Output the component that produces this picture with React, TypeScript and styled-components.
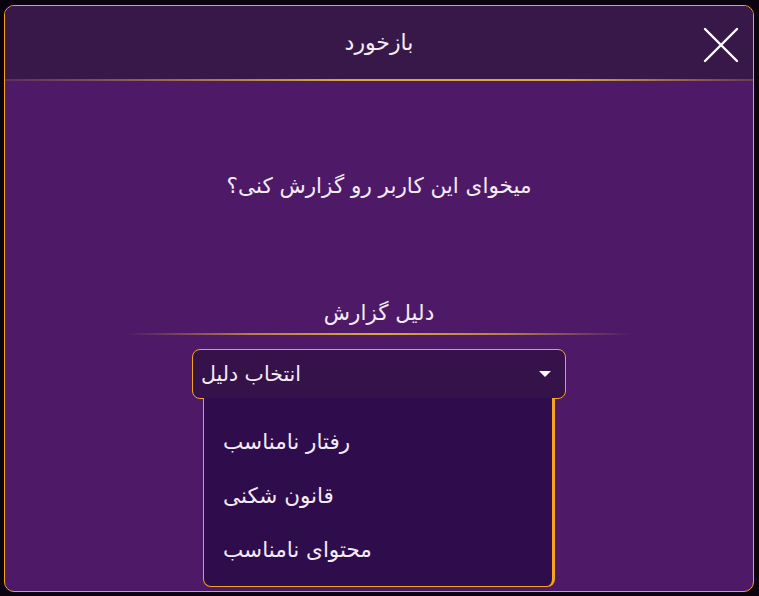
import React, { ReactElement } from 'react'
import styled, { createGlobalStyle } from 'styled-components'

const gold = '#f3a51f'
const textColor = '#f3ecf5'
const arabicFont = `'DejaVu Sans', 'Noto Sans', sans-serif`

const GlobalStyle = createGlobalStyle`
  html, body {
    margin: 0;
    padding: 0;
    background: #0b0410;
    font-family: ${arabicFont};
  }
`

const Page = styled.div`
  width: 759px;
  height: 596px;
  padding: 5px 5px 0 4px;
  box-sizing: border-box;
`

const Modal = styled.div`
  width: 750px;
  height: 587px;
  box-sizing: border-box;
  border: 1px solid ${gold};
  border-radius: 10px;
  background: #4e1a68;
  overflow: hidden;
  display: flex;
  flex-direction: column;
`

const Header = styled.div`
  position: relative;
  height: 73px;
  flex-shrink: 0;
  background: #371848;
  display: flex;
  align-items: center;
  justify-content: center;
  border-bottom: 2px solid transparent;
  border-image: linear-gradient(90deg, #5a3060 0%, #d9a93f 45%, #d9a93f 75%, #6a3a55 100%) 1;
`

const Title = styled.h1`
  margin: 0;
  font-size: 22px;
  font-weight: normal;
  color: ${textColor};
  direction: rtl;
`

const CloseButton = styled.button`
  position: absolute;
  right: 14px;
  top: 21px;
  width: 36px;
  height: 36px;
  padding: 0;
  border: none;
  background: none;
  cursor: pointer;
`

const Body = styled.div`
  display: flex;
  flex-direction: column;
  align-items: center;
  padding-top: 90px;
`

const Question = styled.p`
  margin: 0;
  font-size: 21.5px;
  line-height: 30px;
  color: ${textColor};
  direction: rtl;
`

const Label = styled.div`
  margin-top: 97px;
  font-size: 21.5px;
  line-height: 30px;
  color: ${textColor};
  direction: rtl;
`

const Divider = styled.div`
  width: 506px;
  height: 2px;
  margin-top: 5px;
  background: linear-gradient(90deg, rgba(217, 169, 63, 0) 0%, #b8804a 25%, #d9a93f 50%, #b8804a 75%, rgba(217, 169, 63, 0) 100%);
`

const SelectWrap = styled.div`
  position: relative;
  margin-top: 14px;
  width: 374px;
`

const SelectBox = styled.div`
  height: 50px;
  box-sizing: border-box;
  border: 1px solid ${gold};
  border-radius: 8px;
  background: #36124a;
  display: flex;
  align-items: center;
  justify-content: space-between;
  padding: 0 14px 0 8px;
  color: ${textColor};
  font-size: 20.5px;
`

const Caret = styled.span`
  width: 0;
  height: 0;
  border-left: 6px solid transparent;
  border-right: 6px solid transparent;
  border-top: 6px solid #ffffff;
`

const Menu = styled.ul`
  position: absolute;
  top: 49px;
  left: 11px;
  width: 352px;
  box-sizing: border-box;
  margin: 0;
  padding: 16px 0 10px;
  list-style: none;
  background: #2f0c4b;
  border: 1px solid ${gold};
  border-top: none;
  border-right-width: 3px;
  border-radius: 0 0 8px 8px;
`

const MenuItem = styled.li`
  height: 54px;
  display: flex;
  align-items: center;
  padding-left: 19px;
  color: ${textColor};
  font-size: 21.5px;
`

const reasons = ['رفتار نامناسب', 'قانون شکنی', 'محتوای نامناسب']

export default function App(): ReactElement {
  return (
    <Page>
      <GlobalStyle />
      <Modal>
        <Header>
          <Title>بازخورد</Title>
          <CloseButton aria-label="close">
            <svg width="36" height="36" viewBox="0 0 36 36">
              <path d="M2 2 L34 34 M34 2 L2 34" stroke="#ffffff" strokeWidth="2.4" strokeLinecap="round" />
            </svg>
          </CloseButton>
        </Header>
        <Body>
          <Question>میخوای این کاربر رو گزارش کنی؟</Question>
          <Label>دلیل گزارش</Label>
          <Divider />
          <SelectWrap>
            <SelectBox>
              <span dir="rtl">انتخاب دلیل</span>
              <Caret />
            </SelectBox>
            <Menu>
              {reasons.map((r) => (
                <MenuItem key={r}>
                  <span dir="rtl">{r}</span>
                </MenuItem>
              ))}
            </Menu>
          </SelectWrap>
        </Body>
      </Modal>
    </Page>
  )
}
